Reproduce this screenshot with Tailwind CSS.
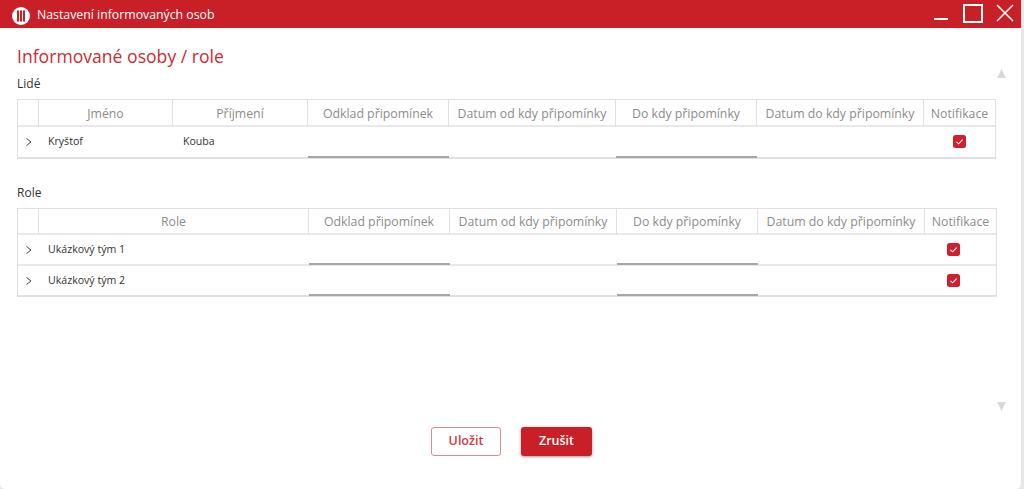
<!DOCTYPE html>
<html lang="cs">
<head>
  <meta charset="UTF-8" />
  <title>Nastavení informovaných osob</title>
  <script src="https://cdn.jsdelivr.net/npm/@tailwindcss/browser@4"></script>
</head>
<body class="bg-[#e8e8e8] font-['Open_Sans',sans-serif] overflow-hidden">
  <div class="w-[1021px] h-[489px] bg-white rounded-b-[5px] flex flex-col relative">
    <!-- Title bar -->
    <header class="h-[28px] bg-[#c91f26] flex items-center pt-[3px] pl-[12px] text-white shrink-0">
      <svg width="18" height="18" viewBox="0 0 18 18">
        <circle cx="9" cy="9" r="9" fill="#fff" />
        <rect x="5" y="3.5" width="2" height="11" fill="#c91f26" />
        <rect x="8" y="3.5" width="2" height="11" fill="#c91f26" />
        <rect x="11" y="3.5" width="2" height="11" fill="#c91f26" />
      </svg>
      <span class="ml-[7px] text-[12.3px]">Nastavení informovaných osob</span>
      <div class="ml-auto self-stretch flex items-start pt-[1px]">
        <svg width="14" height="18" viewBox="0 0 14 18" class="mr-[15px]"><rect x="0" y="14" width="14" height="2" fill="#fff" /></svg>
        <svg width="20" height="19" viewBox="0 0 20 19" class="mr-[13px]"><rect x="1" y="1" width="18" height="17" fill="none" stroke="#fff" stroke-width="2" /></svg>
        <svg width="18" height="18" viewBox="0 0 18 18" class="mr-[7px]"><path d="M1 1 L17 17 M17 1 L1 17" stroke="#fff" stroke-width="1.6" /></svg>
      </div>
    </header>

    <main class="flex-1 pl-[17px] relative">
      <h1 class="text-[#cc2b33] text-[17.6px] leading-[24px] mt-[16px]">Informované osoby / role</h1>
      <h2 class="text-[12px] leading-[16px] mt-[8px] text-[#333]">Lidé</h2>

      <!-- Lidé -->
      <div class="mt-[7px] w-[979px] border border-[#e0e0e0] border-b-2">
        <div class="grid grid-cols-[21px_134px_135px_141px_167px_141px_167px_1fr] h-[27px] border-b-2 border-[#e8e8e8] text-[12.3px] text-[#8c8c8c] text-center leading-[27px] whitespace-nowrap">
          <div class="border-r border-[#e0e0e0]"></div>
          <div class="border-r border-[#e0e0e0]">Jméno</div>
          <div class="border-r border-[#e0e0e0]">Příjmení</div>
          <div class="border-r border-[#e0e0e0]">Odklad připomínek</div>
          <div class="border-r border-[#e0e0e0]">Datum od kdy připomínky</div>
          <div class="border-r border-[#e0e0e0]">Do kdy připomínky</div>
          <div class="border-r border-[#e0e0e0]">Datum do kdy připomínky</div>
          <div>Notifikace</div>
        </div>
        <div class="grid grid-cols-[21px_134px_135px_141px_167px_141px_167px_1fr] h-[30px] items-center text-[10.6px] text-[#333]">
          <svg width="21" height="10" viewBox="0 0 21 10"><path d="M8.5 1.5 L13 5 L8.5 8.5" fill="none" stroke="#444" /></svg>
          <div class="pl-[9px]">Kryštof</div>
          <div class="pl-[10px]">Kouba</div>
          <div class="h-full border-b-2 border-[#a6a6a6] -mb-[2px]"></div>
          <div></div>
          <div class="h-full border-b-2 border-[#a6a6a6] -mb-[2px]"></div>
          <div></div>
          <div class="flex justify-center -mt-[2px]">
            <svg width="13" height="13" viewBox="0 0 13 13"><rect width="13" height="13" rx="2.5" fill="#cf2030" /><path d="M3.5 6.8 L5.6 8.8 L9.6 4.6" fill="none" stroke="#fff" stroke-width="1.1" /></svg>
          </div>
        </div>
      </div>

      <h2 class="text-[12px] leading-[16px] mt-[26px] text-[#333]">Role</h2>

      <!-- Role -->
      <div class="mt-[7px] w-[980px] border border-[#e0e0e0] border-b-2">
        <div class="grid grid-cols-[21px_270px_141px_167px_141px_167px_1fr] h-[26px] border-b-2 border-[#e8e8e8] text-[12.3px] text-[#8c8c8c] text-center leading-[26px] whitespace-nowrap">
          <div class="border-r border-[#e0e0e0]"></div>
          <div class="border-r border-[#e0e0e0]">Role</div>
          <div class="border-r border-[#e0e0e0]">Odklad připomínek</div>
          <div class="border-r border-[#e0e0e0]">Datum od kdy připomínky</div>
          <div class="border-r border-[#e0e0e0]">Do kdy připomínky</div>
          <div class="border-r border-[#e0e0e0]">Datum do kdy připomínky</div>
          <div>Notifikace</div>
        </div>
        <div class="grid grid-cols-[21px_270px_141px_167px_141px_167px_1fr] h-[31px] items-center text-[10.6px] text-[#333] border-b-2 border-[#e8e8e8]">
          <svg width="21" height="10" viewBox="0 0 21 10"><path d="M8.5 1.5 L13 5 L8.5 8.5" fill="none" stroke="#444" /></svg>
          <div class="pl-[9px]">Ukázkový tým 1</div>
          <div class="h-full border-b-2 border-[#a6a6a6] -mb-[2px]"></div>
          <div></div>
          <div class="h-full border-b-2 border-[#a6a6a6] -mb-[2px]"></div>
          <div></div>
          <div class="flex justify-center pr-[15px]">
            <svg width="13" height="13" viewBox="0 0 13 13"><rect width="13" height="13" rx="2.5" fill="#cf2030" /><path d="M3.5 6.8 L5.6 8.8 L9.6 4.6" fill="none" stroke="#fff" stroke-width="1.1" /></svg>
          </div>
        </div>
        <div class="grid grid-cols-[21px_270px_141px_167px_141px_167px_1fr] h-[29px] items-center text-[10.6px] text-[#333]">
          <svg width="21" height="10" viewBox="0 0 21 10"><path d="M8.5 1.5 L13 5 L8.5 8.5" fill="none" stroke="#444" /></svg>
          <div class="pl-[9px]">Ukázkový tým 2</div>
          <div class="h-full border-b-2 border-[#a6a6a6] -mb-[2px]"></div>
          <div></div>
          <div class="h-full border-b-2 border-[#a6a6a6] -mb-[2px]"></div>
          <div></div>
          <div class="flex justify-center pr-[15px]">
            <svg width="13" height="13" viewBox="0 0 13 13"><rect width="13" height="13" rx="2.5" fill="#cf2030" /><path d="M3.5 6.8 L5.6 8.8 L9.6 4.6" fill="none" stroke="#fff" stroke-width="1.1" /></svg>
          </div>
        </div>
      </div>

      <!-- Scroll arrows -->
      <svg width="9" height="9" viewBox="0 0 9 9" class="absolute left-[997px] top-[41px]"><path d="M4.5 0 L9 9 L0 9 Z" fill="#d9d9d9" /></svg>
      <svg width="9" height="9" viewBox="0 0 9 9" class="absolute left-[997px] top-[374px]"><path d="M0 0 L9 0 L4.5 9 Z" fill="#d9d9d9" /></svg>

      <!-- Buttons -->
      <div class="absolute left-[431px] top-[399px] flex gap-[20px]">
        <button class="w-[70px] h-[29px] rounded-[3px] border border-[#e38a8e] text-[#cf3a42] text-[12.5px] font-semibold">Uložit</button>
        <button class="w-[71px] h-[29px] rounded-[3px] bg-[#c91f26] text-white text-[12.5px] font-semibold shadow-[0_1px_3px_rgba(0,0,0,0.4)]">Zrušit</button>
      </div>
    </main>
  </div>
</body>
</html>
